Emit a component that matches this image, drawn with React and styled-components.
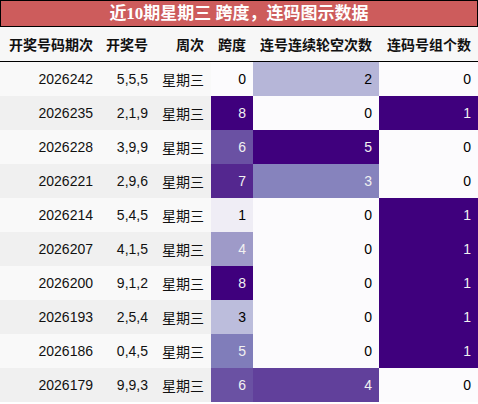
import React from "react";
import styled, { createGlobalStyle } from "styled-components";

const Global = createGlobalStyle`
  html, body { margin: 0; padding: 0; background: #ffffff; }
  body { font-family: "Liberation Sans", "Noto Sans CJK SC", sans-serif; }
`;

const Wrap = styled.div`
  width: 478px;
  display: flex;
  flex-direction: column;
`;

const Title = styled.div`
  height: 25px;
  background: #cd5c5c;
  border: 1px solid #000;
  color: #ffffff;
  font-family: "Liberation Serif", "Noto Sans CJK SC", serif;
  font-weight: bold;
  font-size: 17px;
  display: flex;
  align-items: center;
  justify-content: center;
  line-height: 1;
`;

const Table = styled.table`
  width: 478px;
  border-collapse: collapse;
  table-layout: fixed;
  border-spacing: 0;
`;

const Th = styled.th`
  height: 34px;
  padding: 0 7px 0 0;
  background: #f7f7f7;
  border-bottom: 1px solid #000;
  font-family: "Noto Sans CJK SC", "Liberation Sans", sans-serif;
  font-weight: bold;
  font-size: 14px;
  color: #111;
  text-align: right;
  white-space: nowrap;
`;

const Row = styled.tr`
  background: ${(p) => (p.$odd ? "#f0f0f0" : "#f9f9f9")};
`;

const Td = styled.td`
  height: 34px;
  padding: 0 7px 0 0;
  font-family: ${(p) => (p.$cjk ? '"Noto Sans CJK SC", sans-serif' : '"Liberation Sans", "Noto Sans CJK SC", sans-serif')};
  font-size: 14px;
  text-align: right;
  white-space: nowrap;
  color: #111;
`;

const HeatTd = styled(Td)`
  background: ${(p) => p.$bg};
  color: ${(p) => (p.$light ? "#f1f1f1" : "#000000")};
`;

const PURPLES = [
  [252, 251, 253],
  [239, 237, 245],
  [218, 218, 235],
  [188, 189, 220],
  [158, 154, 200],
  [128, 125, 186],
  [106, 81, 163],
  [84, 39, 143],
  [63, 0, 125],
];

function purple(t) {
  const x = Math.max(0, Math.min(1, t)) * 8;
  const i = Math.min(7, Math.floor(x));
  const f = x - i;
  const a = PURPLES[i];
  const b = PURPLES[i + 1];
  const c = a.map((v, k) => Math.round(v + (b[k] - v) * f));
  return c;
}

function lum(c) {
  const l = c.map((v) => {
    const s = v / 255;
    return s <= 0.03928 ? s / 12.92 : Math.pow((s + 0.055) / 1.055, 2.4);
  });
  return 0.2126 * l[0] + 0.7152 * l[1] + 0.0722 * l[2];
}

function heat(v, min, max) {
  const c = purple(max === min ? 0 : (v - min) / (max - min));
  return { bg: `rgb(${c[0]},${c[1]},${c[2]})`, light: lum(c) < 0.408 };
}

const rows = [
  ["2026242", "5,5,5", 0, 2, 0],
  ["2026235", "2,1,9", 8, 0, 1],
  ["2026228", "3,9,9", 6, 5, 0],
  ["2026221", "2,9,6", 7, 3, 0],
  ["2026214", "5,4,5", 1, 0, 1],
  ["2026207", "4,1,5", 4, 0, 1],
  ["2026200", "9,1,2", 8, 0, 1],
  ["2026193", "2,5,4", 3, 0, 1],
  ["2026186", "0,4,5", 5, 0, 1],
  ["2026179", "9,9,3", 6, 4, 0],
];

const widths = [100, 55, 56, 42, 126, 99];
const heads = ["开奖号码期次", "开奖号", "周次", "跨度", "连号连续轮空次数", "连码号组个数"];

const range = (k) => {
  const vals = rows.map((r) => r[k]);
  return [Math.min(...vals), Math.max(...vals)];
};

export default function App() {
  const r2 = range(2);
  const r3 = range(3);
  const r4 = range(4);
  return (
    <Wrap>
      <Global />
      <Title>近10期星期三 跨度，连码图示数据</Title>
      <Table>
        <colgroup>
          {widths.map((w, i) => (
            <col key={i} style={{ width: w }} />
          ))}
        </colgroup>
        <thead>
          <tr>
            {heads.map((h) => (
              <Th key={h}>{h}</Th>
            ))}
          </tr>
        </thead>
        <tbody>
          {rows.map((r, i) => {
            const h2 = heat(r[2], r2[0], r2[1]);
            const h3 = heat(r[3], r3[0], r3[1]);
            const h4 = heat(r[4], r4[0], r4[1]);
            return (
              <Row key={r[0]} $odd={i % 2 === 1}>
                <Td>{r[0]}</Td>
                <Td>{r[1]}</Td>
                <Td $cjk>星期三</Td>
                <HeatTd $bg={h2.bg} $light={h2.light}>{r[2]}</HeatTd>
                <HeatTd $bg={h3.bg} $light={h3.light}>{r[3]}</HeatTd>
                <HeatTd $bg={h4.bg} $light={h4.light}>{r[4]}</HeatTd>
              </Row>
            );
          })}
        </tbody>
      </Table>
    </Wrap>
  );
}
